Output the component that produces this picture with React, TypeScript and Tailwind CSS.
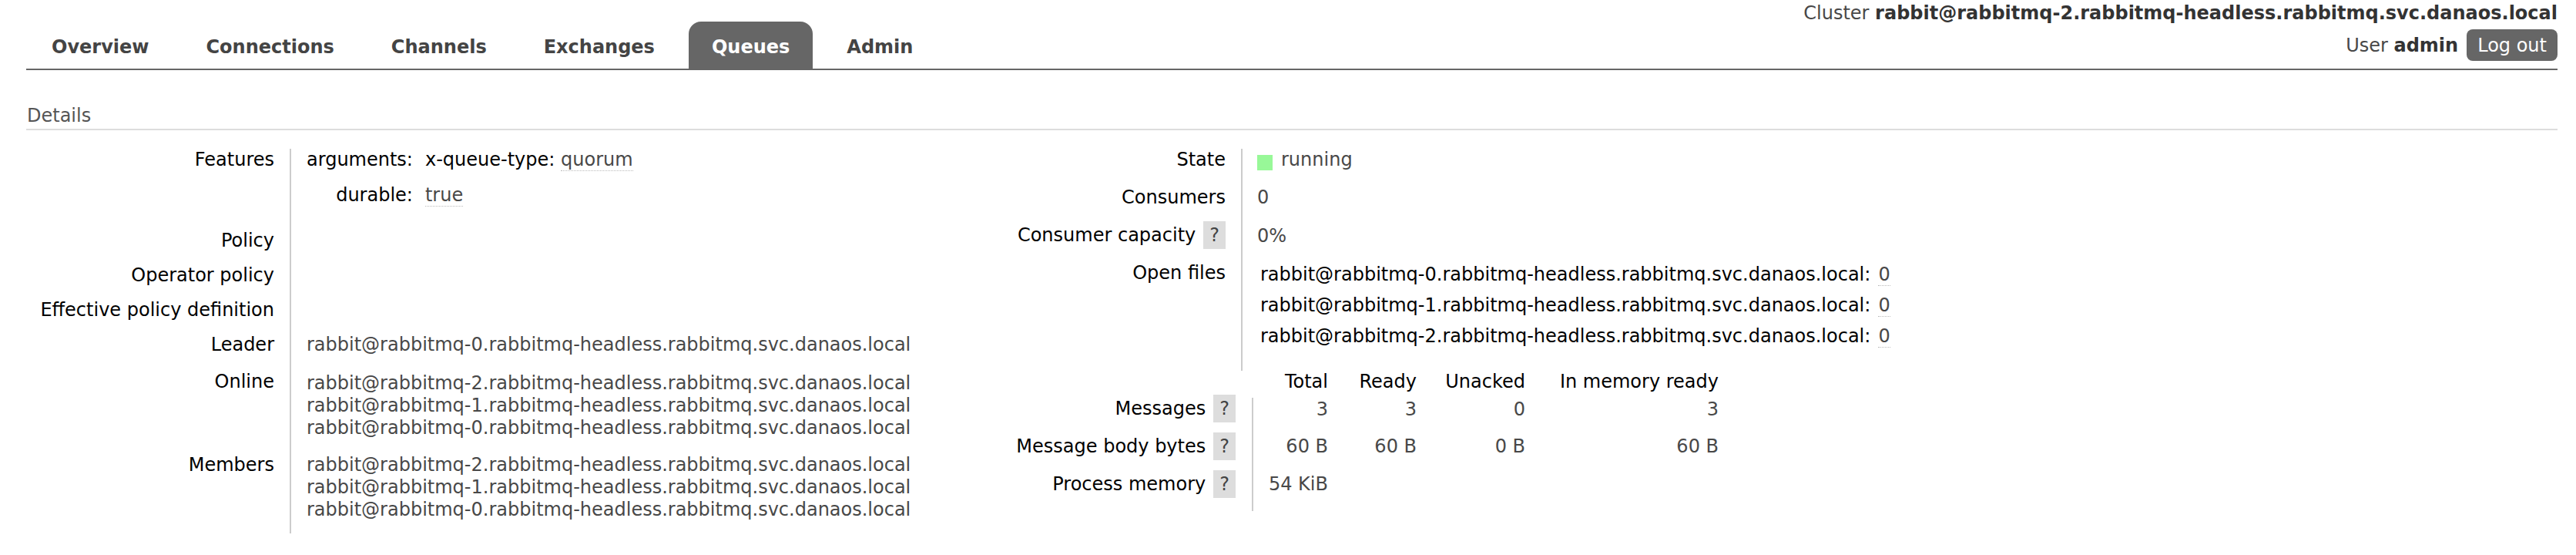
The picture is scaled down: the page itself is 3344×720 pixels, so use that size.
const NODE = 'rabbitmq-headless.rabbitmq.svc.danaos.local';
const node = (n: number) => `rabbit@rabbitmq-${n}.${NODE}`;

const tabs = ['Overview', 'Connections', 'Channels', 'Exchanges', 'Queues', 'Admin'];

function Help() {
  return (
    <span className="ml-[10px] inline-block -my-[4px] bg-[#ddd] px-[8px] py-[4px] leading-[28px] text-[#444]">?</span>
  );
}

function Abbr({ children }: { children: React.ReactNode }) {
  return <span className="border-b border-dotted border-[#bbb] text-[#484848]">{children}</span>;
}

export default function App() {
  return (
    <div className="min-h-screen bg-white font-['DejaVu_Sans',Verdana,sans-serif] text-[24px] leading-[28px] text-[#484848]">
      {/* header: tabs + cluster/user info */}
      <div className="ml-[34px] mr-[24px] flex items-end justify-between border-b-2 border-[#666]">
        <ul className="flex gap-[14px] pl-[3px]">
          {tabs.map((t) => (
            <li key={t}>
              <a
                className={
                  t === 'Queues'
                    ? 'block rounded-t-[16px] bg-[#666] px-[30px] pt-[19px] pb-[14px] font-bold text-white'
                    : 'block px-[30px] pt-[19px] pb-[14px] font-bold text-[#444]'
                }
              >
                {t}
              </a>
            </li>
          ))}
        </ul>
        <div className="flex flex-col items-end pt-[3px] pb-[10px]">
          <div>
            Cluster <b className="text-[#333]">{node(2)}</b>
          </div>
          <div className="mt-[7px] flex items-center">
            <span>
              User <b className="text-[#333]">admin</b>
            </span>
            <button className="ml-[11px] h-[41px] rounded-[8px] bg-[#666] px-[14px] text-white">Log out</button>
          </div>
        </div>
      </div>

      {/* Details section */}
      <div className="ml-[34px] mr-[24px] mt-[45px]">
        <h2 className="border-b-2 border-[#ddd] pb-[3px] pl-[1px] text-[#555]">Details</h2>

        <div className="mt-[24px] flex">
          {/* left facts */}
          <div className="w-[1235px] shrink-0">
            <div className="flex h-[105px]">
              <div className="w-[344px] shrink-0 border-r-2 border-[#ccc] pr-[20px] text-right text-black">Features</div>
              <div className="pl-[20px]">
                <div className="grid grid-cols-[auto_auto] gap-y-[18px] text-black">
                  <div className="text-right">arguments:</div>
                  <div className="pl-[16px]">
                    x-queue-type: <Abbr>quorum</Abbr>
                  </div>
                  <div className="text-right">durable:</div>
                  <div className="pl-[16px]">
                    <Abbr>true</Abbr>
                  </div>
                </div>
              </div>
            </div>
            {['Policy', 'Operator policy', 'Effective policy definition'].map((l) => (
              <div key={l} className="flex h-[45px]">
                <div className="w-[344px] shrink-0 border-r-2 border-[#ccc] pr-[20px] text-right text-black">{l}</div>
                <div className="pl-[20px]" />
              </div>
            ))}
            <div className="flex h-[48px]">
              <div className="w-[344px] shrink-0 border-r-2 border-[#ccc] pr-[20px] text-right text-black">Leader</div>
              <div className="pl-[20px]">{node(0)}</div>
            </div>
            <div className="flex h-[108px]">
              <div className="w-[344px] shrink-0 border-r-2 border-[#ccc] pr-[20px] text-right text-black">Online</div>
              <div className="pl-[20px] pt-[2px] leading-[29px]">
                <div>{node(2)}</div>
                <div>{node(1)}</div>
                <div>{node(0)}</div>
              </div>
            </div>
            <div className="flex h-[103px]">
              <div className="w-[344px] shrink-0 border-r-2 border-[#ccc] pr-[20px] text-right text-black">Members</div>
              <div className="pl-[20px] leading-[29px]">
                <div>{node(2)}</div>
                <div>{node(1)}</div>
                <div>{node(0)}</div>
              </div>
            </div>
          </div>

          {/* right facts */}
          <div>
            <div className="flex h-[49px]">
              <div className="w-[344px] shrink-0 border-r-2 border-[#ccc] pr-[20px] text-right text-black">State</div>
              <div className="flex items-start pl-[19px]">
                <span className="mt-[8px] inline-block h-[20px] w-[20px] bg-[#98f898]" />
                <span className="ml-[11px]">running</span>
              </div>
            </div>
            <div className="flex h-[49px]">
              <div className="w-[344px] shrink-0 border-r-2 border-[#ccc] pr-[20px] text-right text-black">Consumers</div>
              <div className="pl-[19px]">0</div>
            </div>
            <div className="flex h-[49px]">
              <div className="w-[344px] shrink-0 border-r-2 border-[#ccc] pr-[20px] text-right text-black">
                Consumer capacity<Help />
              </div>
              <div className="pl-[19px] pt-[1px]">0%</div>
            </div>
            <div className="flex h-[141px]">
              <div className="w-[344px] shrink-0 border-r-2 border-[#ccc] pr-[20px] text-right text-black">Open files</div>
              <div className="pl-[23px] pt-[2px]">
                <div className="grid grid-cols-[auto_auto] gap-y-[12px]">
                  {[0, 1, 2].map((n) => (
                    <div key={n} className="contents">
                      <div className="text-right text-black">{node(n)}:</div>
                      <div className="pl-[10px]">
                        <Abbr>0</Abbr>
                      </div>
                    </div>
                  ))}
                </div>
              </div>
            </div>

            {/* message stats */}
            <div className="flex h-[35px]">
              <div className="w-[358px] shrink-0" />
              <div className="flex text-right text-black">
                <div className="w-[97px]">Total</div>
                <div className="w-[115px]">Ready</div>
                <div className="w-[141px]">Unacked</div>
                <div className="w-[251px]">In memory ready</div>
              </div>
            </div>
            <div className="flex h-[49px]">
              <div className="w-[358px] shrink-0 border-r-2 border-[#ccc] pr-[21px] text-right text-black">
                Messages<Help />
              </div>
              <div className="flex pt-[1px] text-right">
                <div className="w-[97px]">3</div>
                <div className="w-[115px]">3</div>
                <div className="w-[141px]">0</div>
                <div className="w-[251px]">3</div>
              </div>
            </div>
            <div className="flex h-[49px]">
              <div className="w-[358px] shrink-0 border-r-2 border-[#ccc] pr-[21px] text-right text-black">
                Message body bytes<Help />
              </div>
              <div className="flex text-right">
                <div className="w-[97px]">60 B</div>
                <div className="w-[115px]">60 B</div>
                <div className="w-[141px]">0 B</div>
                <div className="w-[251px]">60 B</div>
              </div>
            </div>
            <div className="flex h-[49px]">
              <div className="w-[358px] shrink-0 border-r-2 border-[#ccc] pr-[21px] text-right text-black">
                Process memory<Help />
              </div>
              <div className="flex text-right">
                <div className="w-[97px]">54 KiB</div>
              </div>
            </div>
          </div>
        </div>
      </div>
    </div>
  );
}
